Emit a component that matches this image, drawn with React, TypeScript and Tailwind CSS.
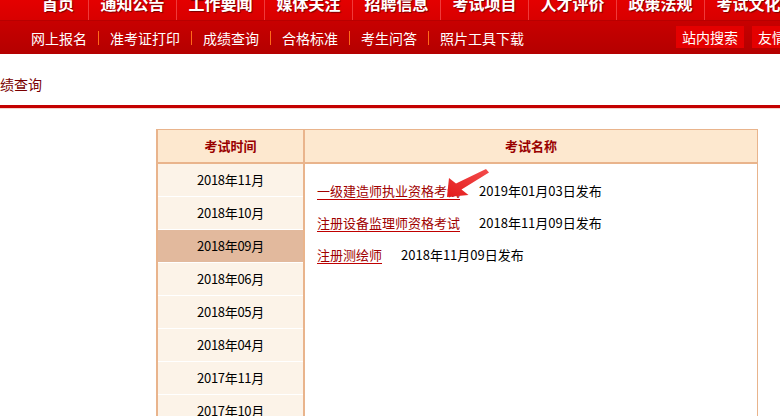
import React from "react";

const mainNav = ["首页", "通知公告", "工作要闻", "媒体关注", "招聘信息", "考试项目", "人才评价", "政策法规", "考试文化"];
const subNav = ["网上报名", "准考证打印", "成绩查询", "合格标准", "考生问答", "照片工具下载"];
const months = ["2018年11月", "2018年10月", "2018年09月", "2018年06月", "2018年05月", "2018年04月", "2017年11月", "2017年10月"];
const exams = [
  { name: "一级建造师执业资格考试", date: "2019年01月03日发布" },
  { name: "注册设备监理师资格考试", date: "2018年11月09日发布" },
  { name: "注册测绘师", date: "2018年11月09日发布" },
];

const font = { fontFamily: '"SimSun", "Noto Sans CJK SC", "Liberation Sans", sans-serif' };

function Arrow() {
  return (
    <svg className="absolute left-[134px] top-[1px] pointer-events-none" width="50" height="34" viewBox="434 160 50 34">
      <defs>
        <linearGradient id="ar" x1="0" y1="1" x2="1" y2="0">
          <stop offset="0" stopColor="#e31c1c" />
          <stop offset="1" stopColor="#f44c4c" />
        </linearGradient>
      </defs>
      <polygon points="442,192 444,173 451,178.5 481,164 484,167.5 456.5,184.5 463.5,190" fill="url(#ar)" />
    </svg>
  );
}

export default function App() {
  return (
    <div className="w-[780px] h-[416px] overflow-hidden bg-white" style={font}>
      {/* main nav */}
      <div className="h-[21px] overflow-hidden bg-gradient-to-b from-[#e40000] to-[#d80000] border-b border-[#b80000] flex pl-[28px]">
        {mainNav.map((t, i) => (
          <div
            key={t}
            className={
              "shrink-0 flex justify-center text-white font-bold text-[16px] leading-[20px] -mt-[7px] " +
              (i === 0 ? "w-[60px]" : "w-[88px] border-l border-[#f03a3a]")
            }
            style={{ textShadow: "1px 1px 1px #7a0000" }}
          >
            {t}
          </div>
        ))}
      </div>

      {/* sub nav */}
      <div className="h-[33px] bg-gradient-to-b from-[#c80000] to-[#b40000] flex items-center pl-[31px] text-white text-[14px]">
        {subNav.map((t, i) => (
          <React.Fragment key={t}>
            {i > 0 && <span className="w-px h-[14px] bg-[#ff6a1a] mx-[11px]" />}
            <span className="leading-[20px]">{t}</span>
          </React.Fragment>
        ))}
        <div className="ml-auto flex gap-[8px] self-start mt-[5px] -mr-[40px]">
          <span className="bg-[#e40000] h-[22px] px-[6px] leading-[22px] w-[68px] text-center">站内搜索</span>
          <span className="bg-[#e40000] h-[22px] px-[6px] leading-[22px] w-[68px] text-center">友情链接</span>
        </div>
      </div>

      {/* title */}
      <div className="h-[51px] flex items-end pb-[13px]">
        <span className="-ml-[14px] text-[14px] text-[#7a0000] leading-[16px]">成绩查询</span>
      </div>
      <div className="h-[3px] bg-[#c40000]" />
      <div className="h-px bg-[#f6d2cc]" />

      {/* table */}
      <div className="mt-[20px] ml-[156px] w-[602px] border border-l-2 border-[#e9b48c]">
        <div className="flex h-[34px] bg-[#fde8cf] border-b-2 border-[#e9b48c] text-[13px] font-bold text-[#990000]">
          <div className="w-[147px] flex items-center justify-center border-r-2 border-[#e9b48c]">考试时间</div>
          <div className="flex-1 flex items-center justify-center">考试名称</div>
        </div>
        <div className="flex">
          <div className="w-[147px] border-r-2 border-[#e9b48c] shrink-0">
            {months.map((m, i) => (
              <div
                key={m}
                className={
                  "h-[33px] border-b border-white flex items-center justify-center text-[13px] text-black tracking-[-0.3px] " +
                  (i === 2 ? "bg-[#e2b99d]" : "bg-[#fcf3e8]")
                }
              >
                {m}
              </div>
            ))}
          </div>
          <div className="flex-1 relative pt-[11px] pl-[12px] text-[13px]">
            {exams.map((e) => (
              <div key={e.name} className="h-[32px] flex items-center">
                <a href="#" className="text-[#a00000] underline decoration-[#c00000] underline-offset-[3px] pr-[4px]">
                  {e.name}
                </a>
                <span className="ml-[15px] text-black">{e.date}</span>
              </div>
            ))}
            <Arrow />
          </div>
        </div>
      </div>
    </div>
  );
}
